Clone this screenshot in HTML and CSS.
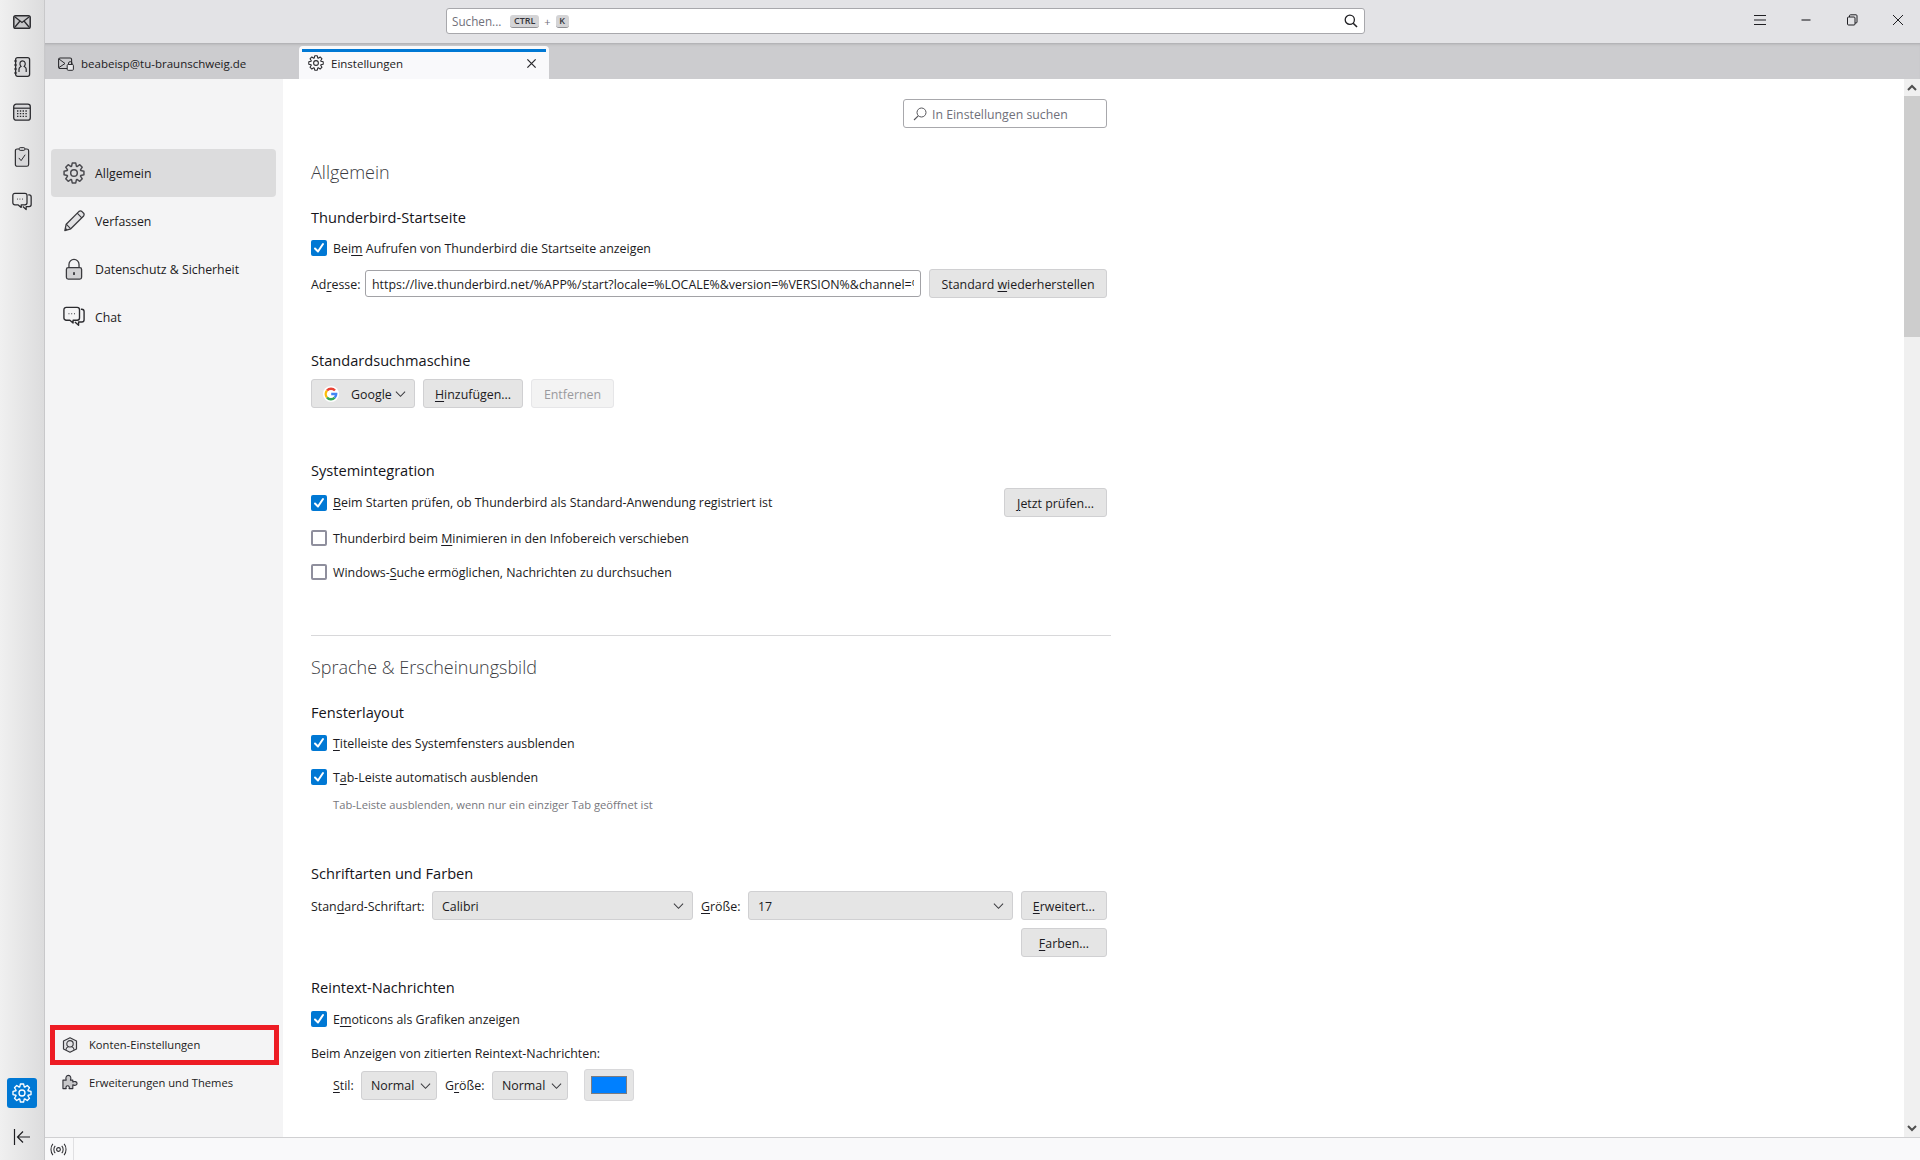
FILE: index.html
```html
<!DOCTYPE html>
<html lang="de">
<head>
<meta charset="utf-8">
<title>Einstellungen</title>
<link rel="stylesheet" href="styles.css">
</head>
<body>
<svg class="defs" width="0" height="0" aria-hidden="true">
  <symbol id="gear" viewBox="0 0 24 24">
    <path fill="none" stroke="currentColor" stroke-width="1.6" stroke-linejoin="round" d="M9.33 4.67L10.09 1.17H13.91L14.67 4.67L15.3 4.93L18.31 2.99L21.01 5.69L19.07 8.7L19.33 9.33L22.83 10.09V13.91L19.33 14.67L19.07 15.3L21.01 18.31L18.31 21.01L15.3 19.07L14.67 19.33L13.91 22.83H10.09L9.33 19.33L8.7 19.07L5.69 21.01L2.99 18.31L4.93 15.3L4.67 14.67L1.17 13.91V10.09L4.67 9.33L4.93 8.7L2.99 5.69L5.69 2.99L8.7 4.93Z"/>
    <circle cx="12" cy="12" r="3.6" fill="none" stroke="currentColor" stroke-width="1.6"/>
  </symbol>
  <symbol id="chat" viewBox="0 0 24 24">
    <path fill="none" stroke="currentColor" stroke-width="1.5" stroke-linejoin="round" d="M3.5 1.5H15.5A2.5 2.5 0 0 1 18 4V13A2.5 2.5 0 0 1 15.5 15.5H11V18.5L7.5 15.5H3.5A2.5 2.5 0 0 1 1 13V4A2.5 2.5 0 0 1 3.5 1.5Z"/>
    <path fill="none" stroke="currentColor" stroke-width="1.5" stroke-linejoin="round" d="M19.5 3.5H20.5A2.5 2.5 0 0 1 23 6V15A2.5 2.5 0 0 1 20.5 17.5H17V21L13 17.5"/>
    <path fill="none" stroke="currentColor" stroke-width="1.2" d="M6 8.5H7M9 8.5H10M12 8.5H13"/>
  </symbol>
  <symbol id="chevron" viewBox="0 0 12 8">
    <path fill="none" stroke="currentColor" stroke-width="1.1" d="M1 1.5L6 6.5L11 1.5"/>
  </symbol>
  <symbol id="tick" viewBox="0 0 16 16">
    <path fill="none" stroke="#fff" stroke-width="2" stroke-linecap="round" stroke-linejoin="round" d="M4 8.5L7 11.5L12 4"/>
  </symbol>
</svg>

<div class="app">
  <nav class="spaces">
    <div class="spaces-top">
      <span class="space-btn"><svg class="ico18" viewBox="0 0 18 14"><rect x=".8" y=".8" width="16.4" height="12.4" rx="1.800" fill="#c8c8ca" stroke="#2b2b2f" stroke-width="1.500"/><path d="M2 2L9 7.500L16 2M2 12L7 6M16 12L11 6" fill="none" stroke="#2b2b2f" stroke-width="1.300"/></svg></span>
      <span class="space-btn"><svg class="ico20" viewBox="0 0 18 20"><rect x="2.6" y=".7" width="14" height="18.6" rx="2" fill="#d8d8da" stroke="#2b2b2f" stroke-width="1.3"/><path d="M1 4H4M1 8H4M1 12H4M1 16H4" stroke="#2b2b2f" stroke-width="1.2"/><path d="M6 15V12C6 10.5 7 10 8 9.4C7 8.5 6.8 7 7 6C7.3 4.5 8.5 3.8 9.6 3.8C10.7 3.8 11.9 4.5 12.2 6C12.4 7 12.2 8.5 11.2 9.4C12.2 10 13.2 10.5 13.2 12V15" fill="none" stroke="#2b2b2f" stroke-width="1.2"/></svg></span>
      <span class="space-btn"><svg class="ico18" viewBox="0 0 18 18"><rect x=".7" y="1.2" width="16.6" height="16" rx="2.5" fill="#d8d8da" stroke="#2b2b2f" stroke-width="1.3"/><path d="M1 5.2H17" stroke="#2b2b2f" stroke-width="1.2"/><path d="M4 8H14M4 10.7H14M4 13.4H14" stroke="#2b2b2f" stroke-width="1.3" stroke-dasharray="1.4 1.4"/></svg></span>
      <span class="space-btn"><svg class="ico20" viewBox="0 0 16 22"><rect x=".7" y="2.2" width="14.6" height="19" rx="2" fill="#d8d8da" stroke="#2b2b2f" stroke-width="1.3"/><rect x="5" y=".7" width="6" height="3" rx="1" fill="#d8d8da" stroke="#2b2b2f" stroke-width="1.1"/><path d="M4.5 12L7 15L11.5 8.5" fill="none" stroke="#2b2b2f" stroke-width="1.1"/></svg></span>
      <span class="space-btn"><svg class="ico20 dark"><use href="#chat"/></svg></span>
    </div>
    <div class="spaces-bottom">
      <span class="space-active"><svg class="ico20 light"><use href="#gear"/></svg></span>
      <span class="space-collapse"><svg class="ico18" viewBox="0 0 18 16"><path d="M1.500 0V16M17 8H4.500M10 2.500L4.500 8L10 13.500" fill="none" stroke="#1f1f23" stroke-width="1.200"/></svg></span>
    </div>
  </nav>

  <div class="window">
    <header class="titlebar">
      <div class="quick-search">
        <span class="qs-text">Suchen...</span>
        <kbd class="key key-wide">CTRL</kbd><span class="plus">+</span><kbd class="key">K</kbd>
        <svg class="qs-icon" viewBox="0 0 14 14"><circle cx="5.8" cy="5.8" r="4.6" fill="none" stroke="#1f1f23" stroke-width="1.3"/><path d="M9.2 9.2L13 13" stroke="#1f1f23" stroke-width="1.6"/></svg>
      </div>
      <div class="win-controls">
        <svg class="win-btn" viewBox="0 0 14 14"><path d="M1 2.500H13M1 7H13M1 11.500H13" stroke="#1f1f23" stroke-width="1.100"/></svg>
        <svg class="win-btn" viewBox="0 0 14 14"><path d="M2.500 7H11.500" stroke="#1f1f23" stroke-width="1.100"/></svg>
        <svg class="win-btn" viewBox="0 0 14 14"><rect x="2.500" y="4" width="7.500" height="8" rx="1" fill="none" stroke="#1f1f23"/><path d="M4.500 4V2.800A1 1 0 0 1 5.500 1.800H11A1 1 0 0 1 12 2.800V9A1 1 0 0 1 11 10H10" fill="none" stroke="#1f1f23"/></svg>
        <svg class="win-btn" viewBox="0 0 14 14"><path d="M2 2L12 12M12 2L2 12" stroke="#1f1f23" stroke-width="1"/></svg>
      </div>
    </header>

    <div class="tabbar">
      <div class="tab">
        <svg class="tab-icon" viewBox="0 0 16 14"><rect x=".6" y="1" width="13" height="10.500" rx="1.500" fill="none" stroke="#2b2b2f" stroke-width="1.100"/><path d="M1 2L7 6.500L1 10.500" fill="none" stroke="#2b2b2f"/><rect x="9.200" y="7.500" width="6.200" height="5.800" rx="1" fill="#e8e8ea" stroke="#2b2b2f"/><path d="M10.500 7.500V6A1.800 1.800 0 0 1 14 6V7.500" fill="none" stroke="#2b2b2f"/></svg>
        <span>beabeisp@tu-braunschweig.de</span>
      </div>
      <div class="tab tab-active">
        <svg class="tab-icon dark"><use href="#gear"/></svg>
        <span class="tab-label">Einstellungen</span>
        <svg class="tab-close" viewBox="0 0 12 12"><path d="M1.500 1.500L10.500 10.500M10.500 1.500L1.500 10.500" stroke="#2b2b2f" stroke-width="1.400"/></svg>
      </div>
    </div>

    <div class="body-row">
      <aside class="sidebar">
        <ul class="cats">
          <li class="cat cat-active"><svg class="cat-icon grey"><use href="#gear"/></svg><span>Allgemein</span></li>
          <li class="cat"><svg class="cat-icon" viewBox="0 0 24 24"><path d="M2 22.500L3.500 15.500L17.500 1.500C18.500 .8 19.500 .8 20.500 1.500L22.500 3.500C23.200 4.500 23.200 5.500 22.500 6.500L8.500 20.500Z" fill="#e2e2e4" stroke="#3a3a3e" stroke-width="1.400" stroke-linejoin="round"/><path d="M3.500 15.500L8.500 20.500M15.500 3.500L20.500 8.500" stroke="#3a3a3e" stroke-width="1.200"/><path d="M2 22.500L2.700 19L5 21.500Z" fill="#3a3a3e"/></svg><span>Verfassen</span></li>
          <li class="cat"><svg class="cat-icon" viewBox="0 0 24 24"><path d="M6.500 11V7A5.500 5.500 0 0 1 17.500 7V11" fill="none" stroke="#3a3a3e" stroke-width="1.400"/><rect x="3.700" y="10.500" width="16.600" height="12.500" rx="2" fill="#d2d2d4" stroke="#3a3a3e" stroke-width="1.400"/><rect x="11" y="15.500" width="2" height="3" fill="#3a3a3e"/></svg><span>Datenschutz &amp; Sicherheit</span></li>
          <li class="cat"><svg class="cat-icon dark"><use href="#chat"/></svg><span>Chat</span></li>
        </ul>
        <div class="side-foot">
          <div class="foot-item foot-marked"><svg class="foot-icon" viewBox="0 0 16 16"><path d="M8 .8L14.500 4V12L8 15.200L1.500 12V4Z" fill="#e4e4e6" stroke="#3a3a3e" stroke-width="1.200" stroke-linejoin="round"/><circle cx="8" cy="6.800" r="3.200" fill="none" stroke="#3a3a3e" stroke-width="1.100"/><path d="M3.800 12.800C4.200 10.800 5.500 10 6.300 9.800M12.200 12.800C11.800 10.800 10.500 10 9.700 9.800" fill="none" stroke="#3a3a3e" stroke-width="1.100"/></svg><span>Konten-Einstellungen</span></div>
          <div class="foot-item"><svg class="foot-icon" viewBox="0 0 17 16"><path d="M1 6H4.500C3.500 3.500 4.500 1 6.800 1S10 3.500 9 6H11.500V8C13 7 16 7.500 16 9.500S13 12 11.500 11V15H7.500C8.300 13.500 7.500 12 6 12S3.700 13.500 4.500 15H1Z" fill="#c8c8ca" stroke="#33333a" stroke-width="1.200" stroke-linejoin="round"/></svg><span>Erweiterungen und Themes</span></div>
        </div>
      </aside>

      <main class="content">
        <div class="pane">
          <div class="search-row">
            <div class="pref-search">
              <svg class="ps-icon" viewBox="0 0 14 14"><circle cx="8.500" cy="5.500" r="4.500" fill="none" stroke="#55555a"/><path d="M5.200 8.800L1 13" stroke="#55555a" stroke-width="1.100"/></svg>
              <span>In Einstellungen suchen</span>
            </div>
          </div>

          <h1 class="h1 m29">Allgemein</h1>
          <h2 class="h2 m21">Thunderbird-Startseite</h2>
          <label class="row m8"><span class="check on"><svg><use href="#tick"/></svg></span><span>Bei<u>m</u> Aufrufen von Thunderbird die Startseite anzeigen</span></label>
          <div class="ctl-row m9">
            <span class="lab lab-addr">Ad<u>r</u>esse:</span>
            <div class="url-field"><span class="url-text">https://live.thunderbird.net/%APP%/start?locale=%LOCALE%&amp;version=%VERSION%&amp;channel=%CHANNEL%</span></div>
            <span class="btn btn-restore"><span>Standard <u>w</u>iederherstellen</span></span>
          </div>

          <h2 class="h2 m53">Standardsuchmaschine</h2>
          <div class="ctl-row m8">
            <span class="btn btn-engine">
              <svg class="g-logo" viewBox="0 0 16 16"><circle cx="8" cy="8" r="8" fill="#fff"/><path d="M12 4.600A5.200 5.200 0 0 0 4 4.600" fill="none" stroke="#ea4335" stroke-width="2.400"/><path d="M4 4.600A5.200 5.200 0 0 0 4 11.400" fill="none" stroke="#fbbc05" stroke-width="2.400"/><path d="M4 11.400A5.200 5.200 0 0 0 11.700 11.700" fill="none" stroke="#34a853" stroke-width="2.400"/><path d="M11.700 11.700A5.200 5.200 0 0 0 13.200 8H8.200" fill="none" stroke="#4285f4" stroke-width="2.400"/></svg>
              <span class="engine-name">Google</span><svg class="chev"><use href="#chevron"/></svg>
            </span>
            <span class="btn btn-add"><span><u>H</u>inzufügen...</span></span>
            <span class="btn btn-off"><span>Entfernen</span></span>
          </div>

          <h2 class="h2 m53">Systemintegration</h2>
          <div class="ctl-row spread m7">
            <label class="row"><span class="check on"><svg><use href="#tick"/></svg></span><span><u>B</u>eim Starten prüfen, ob Thunderbird als Standard-Anwendung registriert ist</span></label>
            <span class="btn btn-check"><span><u>J</u>etzt prüfen...</span></span>
          </div>
          <label class="row m9"><span class="check"></span><span>Thunderbird beim <u>M</u>inimieren in den Infobereich verschieben</span></label>
          <label class="row m10"><span class="check"></span><span>Windows-<u>S</u>uche ermöglichen, Nachrichten zu durchsuchen</span></label>

          <hr class="sep">

          <h1 class="h1 m16">Sprache &amp; Erscheinungsbild</h1>
          <h2 class="h2 m21">Fensterlayout</h2>
          <label class="row m8"><span class="check on"><svg><use href="#tick"/></svg></span><span><u>T</u>itelleiste des Systemfensters ausblenden</span></label>
          <label class="row m10"><span class="check on"><svg><use href="#tick"/></svg></span><span>T<u>a</u>b-Leiste automatisch ausblenden</span></label>
          <p class="hint">Tab-Leiste ausblenden, wenn nur ein einziger Tab geöffnet ist</p>

          <h2 class="h2 m49">Schriftarten und Farben</h2>
          <div class="ctl-row m7">
            <span class="lab lab-font">Stan<u>d</u>ard-Schriftart:</span>
            <span class="btn select sel-font"><span>Calibri</span><svg class="chev"><use href="#chevron"/></svg></span>
            <span class="lab lab-size"><u>G</u>röße:</span>
            <span class="btn select sel-size"><span>17</span><svg class="chev"><use href="#chevron"/></svg></span>
            <span class="btn btn-more"><span><u>E</u>rweitert...</span></span>
          </div>
          <div class="ctl-row end m8"><span class="btn btn-more"><span><u>F</u>arben...</span></span></div>

          <h2 class="h2 m21">Reintext-Nachrichten</h2>
          <label class="row m9"><span class="check on"><svg><use href="#tick"/></svg></span><span>E<u>m</u>oticons als Grafiken anzeigen</span></label>
          <div class="plain m13">Beim Anzeigen von zitierten Reintext-Nachrichten:</div>
          <div class="ctl-row quote m5">
            <span class="lab lab-stil"><u>S</u>til:</span>
            <span class="btn select sel-mini"><span>Normal</span><svg class="chev"><use href="#chevron"/></svg></span>
            <span class="lab lab-size">G<u>r</u>öße:</span>
            <span class="btn select sel-mini"><span>Normal</span><svg class="chev"><use href="#chevron"/></svg></span>
            <span class="color-btn"><span class="swatch"></span></span>
          </div>
        </div>
        <div class="scrollbar">
          <span class="sb-btn"><svg class="sb-arrow" viewBox="0 0 10 7"><path d="M1 6L5 2L9 6" fill="none" stroke="#505050" stroke-width="2"/></svg></span>
          <span class="sb-thumb"></span>
          <span class="sb-track"></span>
          <span class="sb-btn"><svg class="sb-arrow" viewBox="0 0 10 7"><path d="M1 1L5 5L9 1" fill="none" stroke="#505050" stroke-width="2"/></svg></span>
        </div>
      </main>
    </div>

    <footer class="statusbar">
      <span class="status-cell"><svg class="status-icon" viewBox="0 0 18 14"><circle cx="9" cy="7" r="2" fill="none" stroke="#2b2b2f" stroke-width="1.200"/><path d="M5.500 3C3.500 5 3.500 9 5.500 11M12.500 3C14.500 5 14.500 9 12.500 11M3 1C.2 4 .2 10 3 13M15 1C17.800 4 17.800 10 15 13" fill="none" stroke="#2b2b2f" stroke-width="1.100"/></svg></span>
    </footer>
  </div>
</div>
</body>
</html>
```

FILE: styles.css
```css
* { box-sizing: border-box; }
html, body { margin: 0; height: 100%; overflow: hidden; }
body {
  font-family: "Open Sans", "Noto Sans", "Liberation Sans", sans-serif;
  font-size: 12.4px;
  color: #1c1b22;
}
.defs { position: absolute; }
u { text-underline-offset: 2px; text-decoration-thickness: 1px; }

.app { display: flex; width: 1920px; height: 1160px; }

/* spaces toolbar */
.spaces {
  width: 45px;
  flex: none;
  display: flex;
  flex-direction: column;
  justify-content: space-between;
  background: linear-gradient(90deg, #f0f0f0, #dcdcdd);
  border-right: 1px solid #c8c8ca;
}
.spaces-top { display: flex; flex-direction: column; margin-top: -1px; }
.space-btn { height: 45px; display: flex; align-items: center; justify-content: center; }
.ico18 { width: 18px; height: 18px; }
.ico20 { width: 20px; height: 20px; }
.dark { color: #2b2b2f; }
.light { color: #fff; }
.spaces-bottom { display: flex; flex-direction: column; align-items: center; }
.space-active { width: 30px; height: 30px; margin-right: 1px; background: #0078d4; border-radius: 3px; display: flex; align-items: center; justify-content: center; }
.space-collapse { height: 52px; display: flex; align-items: center; justify-content: center; padding-top: 6px; }

.window { flex: 1; display: flex; flex-direction: column; min-width: 0; }

/* title bar */
.titlebar {
  height: 43px;
  flex: none;
  background: #e3e3e6;
  display: flex;
  align-items: flex-start;
  position: relative;
  padding-left: 401px;
}
.quick-search {
  margin-top: 8px;
  width: 919px;
  height: 26px;
  background: #fff;
  border: 1px solid #a8a8ac;
  border-radius: 3px;
  display: flex;
  align-items: center;
  padding: 0 5px;
  font-size: 11.7px;
  color: #70707a;
}
.qs-text { margin-right: 9px; }
.key {
  font-family: inherit;
  font-size: 9px;
  font-weight: 600;
  height: 13px;
  min-width: 13px;
  padding: 0 3px;
  border-radius: 3px;
  background: #d4d4d6;
  border-bottom: 1px solid #909094;
  color: #35353a;
  display: flex;
  align-items: center;
  justify-content: center;
}
.key-wide { width: 29px; }
.plus { margin: 0 5px; color: #70707a; font-size: 11px; }
.qs-icon { width: 14px; height: 14px; margin-left: auto; margin-right: 1px; }
.win-controls { position: absolute; top: 13px; right: 15px; display: flex; gap: 32px; }
.win-btn { width: 14px; height: 14px; }

/* tabs */
.tabbar {
  height: 36px;
  flex: none;
  background: #cccccf;
  box-shadow: inset 0 3px 3px -2px #a8a8aa;
  display: flex;
  align-items: flex-end;
  padding-top: 3px;
}
.tab {
  width: 254px;
  height: 33px;
  display: flex;
  align-items: center;
  padding: 2px 0 0 13px;
  font-size: 11.5px;
  color: #1c1b22;
  gap: 7px;
}
.tab-icon { width: 16px; height: 14px; flex: none; }
.tab-active {
  width: 250px;
  position: relative;
  background: #f9f9fb;
  border-radius: 4px 4px 0 0;
  padding: 1px 0 0 9px;
}
.tab-active::before {
  content: "";
  position: absolute;
  top: 3px;
  left: 3px;
  right: 3px;
  height: 3px;
  background: #0078d4;
}
.tab-active .tab-icon { width: 16px; height: 16px; }
.tab-label { flex: 1; }
.tab-close { width: 11px; height: 11px; margin-right: 12px; }

/* main */
.body-row { flex: 1; display: flex; min-height: 0; }
.sidebar {
  width: 238px;
  flex: none;
  background: #f4f4f5;
  display: flex;
  flex-direction: column;
  justify-content: space-between;
  padding-top: 70px;
  padding-bottom: 36px;
}
.cats { list-style: none; margin: 0; padding: 0 7px 0 6px; }
.cat {
  height: 48px;
  display: flex;
  align-items: center;
  padding-left: 12px;
  gap: 10px;
  font-size: 12.3px;
  border-radius: 4px;
}
.cat-active { background: #dcdcdd; }
.cat-icon { width: 22px; height: 22px; flex: none; }
.grey { color: #4a4a4f; }
.side-foot { display: flex; flex-direction: column; margin: 0 4px 0 5px; }
.foot-item {
  height: 36px;
  display: flex;
  align-items: center;
  padding: 0 0 2px 12px;
  gap: 11px;
  font-size: 11.2px;
}
.foot-marked {
  height: 40px;
  border: 5px solid #ed1c24;
  padding: 0 0 1px 7px;
}
.foot-icon { width: 16px; height: 16px; flex: none; }

.content { flex: 1; background: #fff; display: flex; min-width: 0; }
.pane { flex: 1; padding: 20px 0 0 28px; min-width: 0; overflow: hidden; }
.pane > * { width: 800px; }
.search-row { display: flex; justify-content: flex-end; padding-right: 4px; }
.pref-search {
  width: 204px;
  height: 29px;
  border: 1px solid #a8a8ac;
  border-radius: 3px;
  display: flex;
  align-items: center;
  padding: 1px 0 0 9px;
  gap: 5px;
  color: #70707a;
  font-size: 12.3px;
}
.ps-icon { width: 14px; height: 14px; flex: none; }

.h1 { margin: 0; font-weight: 300; font-size: 18px; line-height: 30px; height: 30px; color: #3c3c42; }
.h2 { margin: 0; font-weight: 500; font-size: 14.6px; line-height: 18px; height: 20px; color: #15141a; }
.m5 { margin-top: 5px; }
.m7 { margin-top: 7px; }
.m8 { margin-top: 8px; }
.m9 { margin-top: 9px; }
.m10 { margin-top: 10px; }
.m13 { margin-top: 13px; }
.m16 { margin-top: 16px; }
.m21 { margin-top: 21px; }
.m29 { margin-top: 29px; }
.m49 { margin-top: 49px; }
.m53 { margin-top: 53px; }

.row { display: flex; align-items: center; gap: 6px; height: 24px; }
.check {
  width: 16px;
  height: 16px;
  flex: none;
  border: 2px solid #8f8f9d;
  border-radius: 2px;
  background: #fff;
}
.check.on { border: 0; background: #0078d4; }
.check svg { display: block; width: 16px; height: 16px; }

.ctl-row { display: flex; align-items: center; gap: 8px; height: 29px; padding-right: 4px; }
.spread { justify-content: space-between; }
.end { justify-content: flex-end; }
.lab { flex: none; white-space: nowrap; padding-top: 1px; }
.lab-addr { width: 50px; margin-right: -4px; }
.lab-font { width: 113px; }
.lab-size { width: 39px; }
.lab-stil { width: 20px; }
.plain { height: 20px; line-height: 20px; }
.btn {
  height: 29px;
  flex: none;
  display: flex;
  align-items: center;
  justify-content: center;
  background: #e5e5e5;
  border: 1px solid #d0d0d2;
  border-radius: 3px;
  white-space: nowrap;
  padding-top: 1px;
}
.url-field {
  width: 556px;
  flex: none;
  height: 27px;
  background: #fff;
  border: 1px solid #a2a2a6;
  border-radius: 3px;
  padding: 1px 6px 0;
  display: flex;
  align-items: center;
  overflow: hidden;
}
.url-text { white-space: nowrap; overflow: hidden; }
.btn-restore { width: 178px; }
.btn-engine { width: 104px; justify-content: flex-start; padding-left: 11px; }
.g-logo { width: 16px; height: 16px; margin-right: 12px; flex: none; }
.engine-name { margin-right: 3px; }
.chev { width: 11px; height: 8px; color: #3a3a3e; flex: none; }
.btn-add { width: 100px; }
.btn-off { width: 83px; background: #f3f3f3; border-color: #e6e6e8; color: #9a9a9e; }
.btn-check { width: 103px; }
.select { justify-content: space-between; padding: 1px 8px 0 9px; }
.sel-font { width: 261px; }
.sel-size { width: 265px; }
.btn-more { width: 86px; }
.sel-mini { width: 76px; padding: 1px 5px 0 9px; }
.quote { padding-left: 22px; height: 32px; }
.color-btn {
  width: 50px;
  height: 32px;
  margin-left: 8px;
  flex: none;
  background: #e5e5e5;
  border: 1px solid #d8d8da;
  border-radius: 3px;
  display: flex;
  align-items: center;
  justify-content: center;
}
.swatch { width: 36px; height: 18px; background: #0080ff; border: 1px solid #7c7c80; }

.hint { margin: 6px 0 0; padding-left: 22px; height: 20px; line-height: 20px; font-size: 11.2px; color: #77777d; }
.sep { margin: 51px 0 0; height: 1px; border: 0; background: #d8d8da; }

.scrollbar { width: 16px; flex: none; background: #f0f0f0; display: flex; flex-direction: column; margin-left: auto; }
.sb-btn { height: 17px; flex: none; display: flex; align-items: center; justify-content: center; }
.sb-arrow { width: 10px; height: 7px; }
.sb-thumb { height: 241px; background: #cdcdcd; flex: none; }
.sb-track { flex: 1; }

.statusbar {
  height: 23px;
  flex: none;
  background: #f9f9fa;
  border-top: 1px solid #d0d0d2;
  display: flex;
}
.status-cell { width: 29px; border-right: 1px solid #e0e0e2; display: flex; align-items: center; justify-content: center; padding-right: 2px; }
.status-icon { width: 17px; height: 13px; }
```
